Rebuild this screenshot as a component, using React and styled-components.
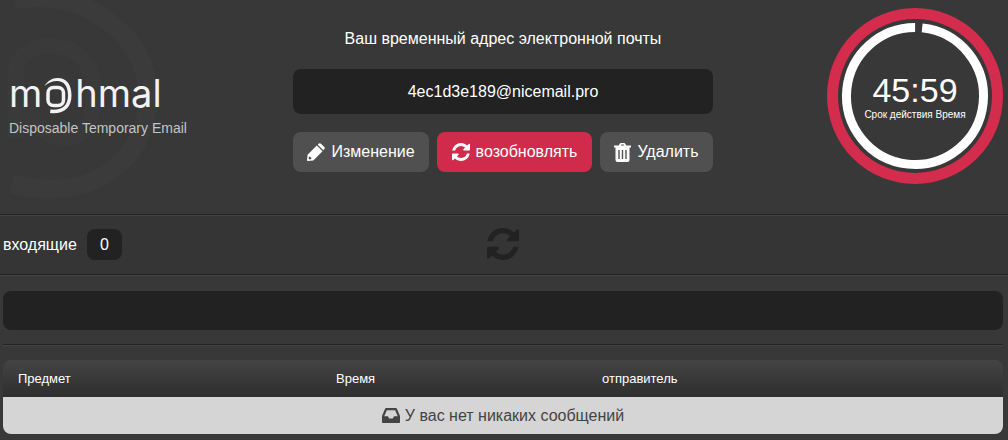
import React from 'react'
import styled, { createGlobalStyle } from 'styled-components';

const GlobalStyle = createGlobalStyle`
  * {
    box-sizing: border-box;
  }

  body {
    margin: 0;
    background-color: #383838;
    color: #fff;
    font-family: "Liberation Sans", Arial, sans-serif;
    font-size: 16px;
    line-height: 20px;
  }
`;

const Page = styled.div`
  position: relative;
  overflow: hidden;
`;

const Watermark = styled.svg`
  position: absolute;
  top: 0;
  left: 0;
  width: 200px;
  height: 214px;
`;

const Header = styled.header`
  position: relative;
  display: grid;
  grid-template-columns: 1fr 420px 1fr;
  padding: 8px 5px 30px 3px;
`;

const Brand = styled.a`
  display: flex;
  flex-direction: column;
  align-items: flex-start;
  padding: 66px 0 0 6px;
  color: #c4c4c4;
  text-decoration: none;
`;

const LogoWord = styled.span`
  display: flex;
  align-items: flex-start;
  height: 36px;
  color: #f2f2f2;
  font-family: Inter, sans-serif;
  font-size: 38px;
  font-weight: 400;
  line-height: 38px;
`;

const LogoMark = styled.svg`
  width: 30px;
  height: 40px;
  margin: 0 2px 0 1px;
`;

const Slogan = styled.span`
  margin-top: 8px;
  font-size: 14px;
  line-height: 20px;
`;

const Mailbox = styled.div`
  display: flex;
  flex-direction: column;
  padding-top: 21px;
`;

const MailboxTitle = styled.h1`
  margin: 0 0 20px;
  font-size: 16px;
  font-weight: 400;
  text-align: center;
`;

const Address = styled.div`
  padding: 12px;
  border-radius: 8px;
  background-color: #222;
  line-height: 21px;
  text-align: center;
`;

const Actions = styled.div`
  display: flex;
  gap: 8px;
  margin-top: 18px;
`;

const ActionButton = styled.button`
  display: flex;
  flex: 1 0 auto;
  align-items: center;
  justify-content: center;
  gap: 6px;
  height: 40px;
  padding: 0 14px;
  border: 0;
  border-radius: 8px;
  background-color: ${props => props.$primary ? '#d02b4b' : '#505050'};
  color: #fff;
  font: inherit;
  cursor: pointer;
`;

const Icon = styled.svg`
  width: ${props => props.$width}px;
  height: ${props => props.$height || props.$width}px;
  fill: currentColor;
`;

const Timer = styled.div`
  display: grid;
  justify-self: end;
  width: 176px;
  height: 176px;

  > * {
    grid-area: 1 / 1;
  }
`;

const TimerText = styled.div`
  display: flex;
  flex-direction: column;
  align-items: center;
  padding-top: 64px;
`;

const TimerValue = styled.span`
  font-size: 34px;
  line-height: 36px;
`;

const TimerLabel = styled.span`
  font-size: 10px;
  line-height: 14px;
`;

const InboxBar = styled.div`
  display: grid;
  grid-template-columns: 1fr auto 1fr;
  align-items: center;
  height: 61px;
  padding: 0 5px 0 3px;
  border-top: 1px solid #222;
  border-bottom: 1px solid #222;
  background-color: #353535;
  box-shadow: inset 0 1px 0 #444, 0 1px 0 #444;
`;

const InboxTitle = styled.h2`
  display: flex;
  align-items: center;
  gap: 10px;
  margin: 0;
  font-size: 16px;
  font-weight: 400;
`;

const Count = styled.span`
  padding: 5px 13px;
  border-radius: 8px;
  background-color: #222;
  line-height: 21px;
`;

const RefreshButton = styled.button`
  display: flex;
  padding: 0 0 2px;
  border: 0;
  background: none;
  color: #222;
  cursor: pointer;
`;

const Content = styled.main`
  padding: 16px 5px 6px 3px;
`;

const MessagePanel = styled.div`
  height: 39px;
  border-radius: 8px;
  background-color: #222;
`;

const Divider = styled.hr`
  height: 2px;
  margin: 14px 0;
  border: 0;
  border-top: 1px solid #222;
  border-bottom: 1px solid #444;
`;

const MessageTable = styled.table`
  width: 100%;
  table-layout: fixed;
  border-spacing: 0;
  border-radius: 8px;
  overflow: hidden;

  thead {
    background: linear-gradient(#444, #2e2e2e);
  }
`;

const HeadCell = styled.th`
  width: ${props => props.$width};
  height: 37px;
  padding: 0 15px;
  font-size: 13px;
  font-weight: 400;
  text-align: left;
`;

const EmptyCell = styled.td`
  height: 37px;
  padding: 0;
  background-color: #d5d5d5;
  color: #444;
`;

const EmptyNote = styled.div`
  display: flex;
  align-items: center;
  justify-content: center;
  gap: 5px;
`;

const COLUMNS = [
    { name: 'Предмет', width: '31.8%' },
    { name: 'Время', width: '26.6%' },
    { name: 'отправитель', width: 'auto' },
]

function PencilIcon() {
    return (
        <Icon $width={18} viewBox="0 0 18 18" aria-hidden="true">
            <path
                fillRule="evenodd"
                d="M0 17.200L.6 11.700L9.800 2.500L15.500 8.200L6.300 17.400L.8 18Q0 18 0 17.200ZM1.900 13.700L1.600 15.400L2.600 16.400L4.300 16.100L4.300 14.600L3.400 14.600L3.400 13.700Z"
            />
            <path d="M10.800 1.700L11.900 .6Q12.900-.3 14 .7L17.300 4Q18.300 5.100 17.300 6.100L16.300 7.200Z" />
        </Icon>
    )
}

function RefreshIcon({ size }) {
    return (
        <Icon $width={size} viewBox="0 0 1536 1536" aria-hidden="true">
            <path d="M1511 928q0 5-1 7-64 268-268 434.500t-478 166.500q-146 0-282.500-55t-243.500-157l-129 129q-19 19-45 19t-45-19-19-45v-448q0-26 19-45t45-19h448q26 0 45 19t19 45-19 45l-137 137q71 66 161 102t187 36q134 0 250-65t186-179q11-17 53-117 8-23 30-23h192q13 0 22.500 9.500t9.500 22.500zm25-800v448q0 26-19 45t-45 19h-448q-26 0-45-19t-19-45 19-45l138-138q-148-137-349-137-134 0-250 65t-186 179q-11 17-53 117-8 23-30 23h-199q-13 0-22.500-9.500t-9.500-22.500v-7q65-268 270-434.500t480-166.500q146 0 284 55.500t245 156.500l130-129q19-19 45-19t45 19 19 45z" />
        </Icon>
    )
}

function TrashIcon() {
    return (
        <Icon $width={17} $height={19} viewBox="0 0 17 19" aria-hidden="true">
            <path
                fillRule="evenodd"
                d="M0 2.500H4.700L5.600 .9Q6.100 0 7 0H10Q10.900 0 11.400 .9L12.300 2.500H17V4.500H0ZM6.700 2.500H10.300L9.700 1.500H7.300Z"
            />
            <path
                fillRule="evenodd"
                d="M1.500 4H15.500V17Q15.500 19 13.500 19H3.500Q1.500 19 1.500 17ZM4.300 7V16H5.700V7ZM7.800 7V16H9.200V7ZM11.300 7V16H12.700V7Z"
            />
        </Icon>
    )
}

function InboxIcon() {
    return (
        <Icon $width={18} $height={15} viewBox="0 256 1536 1280" aria-hidden="true">
            <path d="M1023 960h316q-1-3-2.500-8t-2.500-8l-212-496h-708l-212 496q-1 2-2.500 8t-2.500 8h316l95 192h320zm513 30v482q0 26-19 45t-45 19h-1408q-26 0-45-19t-19-45v-482q0-62 25-123l238-552q10-25 36.500-42t52.500-17h832q26 0 52.500 17t36.500 42l238 552q25 61 25 123z" />
        </Icon>
    )
}

function Logo() {
    return (
        <LogoWord>
            m
            <LogoMark viewBox="0 0 30 40" fill="none" aria-label="o">
                <rect x="5" y="13.500" width="15.500" height="18" rx="5.500" stroke="currentColor" strokeWidth="3.500" />
                <path
                    fill="currentColor"
                    d="M1.500 12C4.500 7 9 4 14.500 4C24 4 28.500 11 28.500 21.500C28.500 33.500 21 40.500 7 39L7.500 35.500C18.500 36.500 25 32 25 21.500C25 12 21 7 14 7C9.500 7 5.500 8.500 1.500 12Z"
                />
            </LogoMark>
            hmal
        </LogoWord>
    )
}

function CountdownComp({ time, label }) {
    return (
        <Timer>
            <svg viewBox="0 0 176 176" fill="none" aria-hidden="true">
                <circle cx="88" cy="88" r="82.500" stroke="#d32c4c" strokeWidth="11" />
                <circle
                    cx="88"
                    cy="88"
                    r="68.500"
                    stroke="#fff"
                    strokeWidth="9"
                    pathLength="360"
                    strokeDasharray="354 6"
                    transform="rotate(-84 88 88)"
                />
            </svg>
            <TimerText>
                <TimerValue>{time}</TimerValue>
                <TimerLabel>{label}</TimerLabel>
            </TimerText>
        </Timer>
    )
}

function App() {
    return (
        <>
            <GlobalStyle />
            <Page>
                <Watermark viewBox="0 0 200 214" fill="none" stroke="#3b3b3b" strokeWidth="19" aria-hidden="true">
                    <path d="M14 0Q60-8 96 13C130 34 148 62 148 96C148 150 108 189 50 189Q30 189 12 184" />
                    <path d="M16 138V74C16 56 30 46 50 46C80 46 94 66 94 94C94 122 84 138 66 138C48 138 34 126 24 104" strokeWidth="16" stroke="#3a3a3a" />
                </Watermark>

                <Header>
                    <Brand href="#">
                        <Logo />
                        <Slogan>Disposable Temporary Email</Slogan>
                    </Brand>

                    <Mailbox>
                        <MailboxTitle>Ваш временный адрес электронной почты</MailboxTitle>
                        <Address>4ec1d3e189@nicemail.pro</Address>
                        <Actions>
                            <ActionButton type="button">
                                <PencilIcon />
                                Изменение
                            </ActionButton>
                            <ActionButton type="button" $primary>
                                <RefreshIcon size={18} />
                                возобновлять
                            </ActionButton>
                            <ActionButton type="button">
                                <TrashIcon />
                                Удалить
                            </ActionButton>
                        </Actions>
                    </Mailbox>

                    <CountdownComp time="45:59" label="Срок действия Время" />
                </Header>

                <InboxBar>
                    <InboxTitle>
                        входящие
                        <Count>0</Count>
                    </InboxTitle>
                    <RefreshButton type="button" aria-label="возобновлять">
                        <RefreshIcon size={32} />
                    </RefreshButton>
                </InboxBar>

                <Content>
                    <MessagePanel />
                    <Divider />
                    <MessageTable>
                        <thead>
                            <tr>
                                {COLUMNS.map((value) =>
                                    <HeadCell key={value.name} scope="col" $width={value.width}>
                                        {value.name}
                                    </HeadCell>
                                )}
                            </tr>
                        </thead>
                        <tbody>
                            <tr>
                                <EmptyCell colSpan={COLUMNS.length}>
                                    <EmptyNote>
                                        <InboxIcon />
                                        У вас нет никаких сообщений
                                    </EmptyNote>
                                </EmptyCell>
                            </tr>
                        </tbody>
                    </MessageTable>
                </Content>
            </Page>
        </>
    )
}

export default App
